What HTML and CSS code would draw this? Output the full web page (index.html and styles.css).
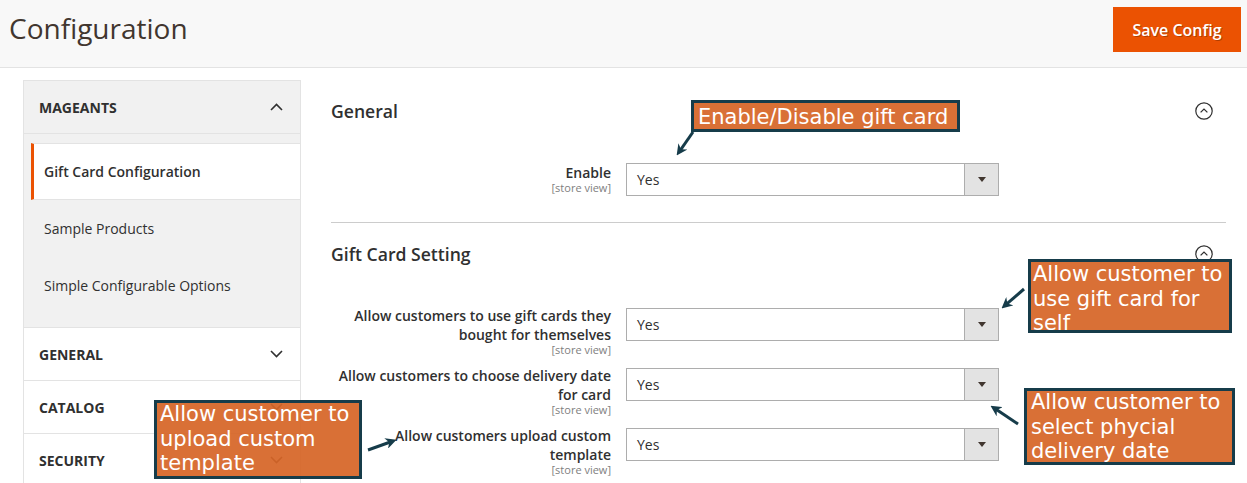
FILE: index.html
```html
<!DOCTYPE html>
<html lang="en">
<head>
<meta charset="utf-8">
<title>Configuration</title>
<link rel="stylesheet" href="styles.css">
</head>
<body>
<header class="page-header">
  <h1 class="page-title">Configuration</h1>
  <button class="btn-primary" type="button">Save Config</button>
</header>

<div class="page-body">
  <aside class="sidebar">
    <div class="nav-block nav-block--open">
      <div class="nav-title">
        <span>MAGEANTS</span>
        <svg class="chev" width="13" height="8" viewBox="0 0 13 8"><path d="M1 7 L6.5 1.5 L12 7" /></svg>
      </div>
      <ul class="nav-list">
        <li class="nav-item nav-item--active">Gift Card Configuration</li>
        <li class="nav-item">Sample Products</li>
        <li class="nav-item">Simple Configurable Options</li>
      </ul>
    </div>
    <div class="nav-title">
      <span>GENERAL</span>
      <svg class="chev" width="13" height="8" viewBox="0 0 13 8"><path d="M1 1 L6.5 6.5 L12 1" /></svg>
    </div>
    <div class="nav-title">
      <span>CATALOG</span>
      <svg class="chev" width="13" height="8" viewBox="0 0 13 8"><path d="M1 1 L6.5 6.5 L12 1" /></svg>
    </div>
    <div class="nav-title">
      <span>SECURITY</span>
      <svg class="chev" width="13" height="8" viewBox="0 0 13 8"><path d="M1 1 L6.5 6.5 L12 1" /></svg>
    </div>
  </aside>

  <main class="content">
    <section class="cfg-section cfg-section--divided">
      <div class="section-head">
        <h2 class="section-title">General</h2>
        <svg class="collapse" width="18" height="18" viewBox="0 0 18 18"><circle cx="9" cy="9" r="8.2" /><path d="M5.6 10.4 L9 7.1 L12.4 10.4" /></svg>
      </div>
      <div class="fields">
        <div class="field">
          <div class="field-label"><span class="label-text">Enable</span><span class="scope">[store view]</span></div>
          <div class="select"><span class="select-value">Yes</span><span class="select-btn"><svg width="8" height="5" viewBox="0 0 8 5"><path d="M0 0 H8 L4 5 Z" /></svg></span></div>
        </div>
      </div>
    </section>

    <section class="cfg-section">
      <div class="section-head">
        <h2 class="section-title">Gift Card Setting</h2>
        <svg class="collapse" width="18" height="18" viewBox="0 0 18 18"><circle cx="9" cy="9" r="8.2" /><path d="M5.6 10.4 L9 7.1 L12.4 10.4" /></svg>
      </div>
      <div class="fields fields--wide">
        <div class="field">
          <div class="field-label"><span class="label-text">Allow customers to use gift cards they bought for themselves</span><span class="scope">[store view]</span></div>
          <div class="select"><span class="select-value">Yes</span><span class="select-btn"><svg width="8" height="5" viewBox="0 0 8 5"><path d="M0 0 H8 L4 5 Z" /></svg></span></div>
        </div>
        <div class="field">
          <div class="field-label"><span class="label-text">Allow customers to choose delivery date for card</span><span class="scope">[store view]</span></div>
          <div class="select"><span class="select-value">Yes</span><span class="select-btn"><svg width="8" height="5" viewBox="0 0 8 5"><path d="M0 0 H8 L4 5 Z" /></svg></span></div>
        </div>
        <div class="field">
          <div class="field-label"><span class="label-text">Allow customers upload custom template</span><span class="scope">[store view]</span></div>
          <div class="select"><span class="select-value">Yes</span><span class="select-btn"><svg width="8" height="5" viewBox="0 0 8 5"><path d="M0 0 H8 L4 5 Z" /></svg></span></div>
        </div>
      </div>
    </section>
  </main>
</div>

<div class="notes">
  <svg class="arrows" width="1247" height="483" viewBox="0 0 1247 483">
    <defs>
      <marker id="head" markerUnits="userSpaceOnUse" markerWidth="11" markerHeight="11" viewBox="0 0 10 10" refX="4" refY="5" orient="auto">
        <path d="M0 0 L10 5 L0 10 L3 5 Z" fill="#163c4a" />
      </marker>
    </defs>
    <line x1="693" y1="132" x2="680.4" y2="150.1" marker-end="url(#head)" />
    <line x1="1024" y1="289" x2="1006.5" y2="304.1" marker-end="url(#head)" />
    <line x1="1018" y1="424" x2="996" y2="409.3" marker-end="url(#head)" />
    <line x1="368" y1="450" x2="390.3" y2="442" marker-end="url(#head)" />
  </svg>
  <div class="note note--enable"><span class="note-text">Enable/Disable gift card</span></div>
  <div class="note note--self"><span class="note-text">Allow customer to use gift card for self</span></div>
  <div class="note note--delivery"><span class="note-text">Allow customer to select phycial delivery date</span></div>
  <div class="note note--template"><span class="note-text">Allow customer to upload custom template</span></div>
</div>
</body>
</html>
```

FILE: styles.css
```css
html, body {
  margin: 0;
  padding: 0;
}

body {
  position: relative;
  height: 483px;
  overflow: hidden;
  background: #ffffff;
  color: #303030;
  font-family: "Open Sans", "Liberation Sans", sans-serif;
}

/* ---------- header ---------- */
.page-header {
  display: flex;
  justify-content: space-between;
  align-items: flex-start;
  height: 67px;
  padding: 0 6px 0 9px;
  background: #f8f8f8;
  border-bottom: 1px solid #e3e3e3;
}

.page-title {
  margin: 9px 0 0;
  font-size: 28px;
  font-weight: 400;
  line-height: 38px;
  color: #41362f;
}

.btn-primary {
  margin-top: 7px;
  width: 128px;
  height: 45px;
  padding: 0;
  border: 1px solid #eb5202;
  background: #eb5202;
  color: #ffffff;
  font-family: "Open Sans", "Liberation Sans", sans-serif;
  font-size: 16px;
  font-weight: 600;
  text-shadow: 1px 1px 0 rgba(0, 0, 0, 0.25);
}

/* ---------- body layout ---------- */
.page-body {
  display: flex;
  align-items: flex-start;
  padding: 12px 0 0 23px;
}

.sidebar {
  flex: none;
  width: 278px;
  box-sizing: border-box;
  border: 1px solid #e3e3e3;
  border-bottom: 0;
}

.nav-title {
  display: flex;
  justify-content: space-between;
  align-items: center;
  height: 52px;
  padding: 0 17px 0 15px;
  border-bottom: 1px solid #e3e3e3;
  background: #ffffff;
  font-size: 14px;
  font-weight: 700;
  color: #303030;
}

.nav-block--open .nav-title {
  background: #f1f1f1;
}

.chev path {
  fill: none;
  stroke: #303030;
  stroke-width: 1.6;
}

.nav-list {
  list-style: none;
  margin: 0;
  padding: 9px 0 13px;
  background: #f1f1f1;
  border-bottom: 1px solid #e3e3e3;
}

.nav-item {
  display: flex;
  align-items: center;
  box-sizing: border-box;
  height: 57px;
  padding-left: 20px;
  font-size: 14px;
  color: #303030;
}

.nav-item--active {
  margin-left: 7px;
  padding-left: 10px;
  border-left: 3px solid #eb5202;
  border-top: 1px solid #e3e3e3;
  border-bottom: 1px solid #e3e3e3;
  background: #ffffff;
  font-weight: 600;
}

/* ---------- content ---------- */
.content {
  flex: none;
  width: 895px;
  margin-left: 30px;
}

.cfg-section {
  padding-top: 20px;
}

.cfg-section--divided {
  padding-bottom: 26px;
  border-bottom: 1px solid #cccccc;
}

.section-head {
  display: flex;
  justify-content: space-between;
  align-items: center;
  height: 22px;
  padding-right: 13px;
}

.section-title {
  margin: 0;
  font-size: 17.6px;
  font-weight: 600;
  line-height: 22px;
  color: #303030;
}

.collapse circle {
  fill: none;
  stroke: #303030;
  stroke-width: 1.2;
}

.collapse path {
  fill: none;
  stroke: #303030;
  stroke-width: 1.3;
}

.fields {
  display: flex;
  flex-direction: column;
  gap: 10px;
  margin-top: 41px;
}

.fields--wide {
  margin-top: 43px;
}

.field {
  display: flex;
  align-items: flex-start;
}

.field-label {
  flex: none;
  width: 280px;
  box-sizing: border-box;
  padding-left: 6px;
  text-align: right;
}

.fields--wide .field-label {
  margin: -2px 0 2px;
}

.label-text {
  display: block;
  font-size: 14px;
  font-weight: 600;
  line-height: 19px;
  color: #303030;
}

.scope {
  display: block;
  font-size: 11px;
  line-height: 12px;
  color: #808080;
}

.select {
  flex: none;
  display: flex;
  width: 373px;
  height: 33px;
  margin-left: 15px;
  box-sizing: border-box;
  border: 1px solid #adadad;
  background: #ffffff;
}

.select-value {
  flex: 1;
  padding-left: 10px;
  font-size: 14px;
  line-height: 31px;
  color: #303030;
}

.select-btn {
  display: flex;
  align-items: center;
  justify-content: center;
  width: 34px;
  box-sizing: border-box;
  border-left: 1px solid #adadad;
  background: #e3e3e3;
}

.select-btn path {
  fill: #41362f;
}

/* ---------- annotation overlay ---------- */
.notes {
  position: absolute;
  left: 0;
  top: 0;
  width: 1247px;
  height: 483px;
  pointer-events: none;
}

.arrows {
  position: absolute;
  left: 0;
  top: 0;
}

.arrows line {
  stroke: #163c4a;
  stroke-width: 3;
}

.note {
  position: absolute;
  box-sizing: border-box;
  overflow: hidden;
  border: 3px solid #163c4a;
  background: rgba(214, 101, 39, 0.93);
  color: #ffffff;
  font-family: "DejaVu Sans", sans-serif;
  font-size: 21px;
  line-height: 24.6px;
}

.note-text {
  display: block;
}

.note--enable {
  left: 691px;
  top: 100px;
  width: 269px;
  height: 32px;
  padding-left: 4px;
}

.note--enable .note-text {
  margin-top: 2px;
}

.note--self {
  left: 1028px;
  top: 259px;
  width: 204px;
  height: 74px;
  padding-left: 2px;
}

.note--self .note-text {
  margin-top: 0;
}

.note--delivery {
  left: 1024px;
  top: 388px;
  width: 211px;
  height: 77px;
  padding-left: 4px;
}

.note--delivery .note-text {
  margin-top: -1px;
}

.note--template {
  left: 154px;
  top: 400px;
  width: 208px;
  height: 79px;
  padding-left: 3px;
}

.note--template .note-text {
  margin-top: -1px;
}
```
